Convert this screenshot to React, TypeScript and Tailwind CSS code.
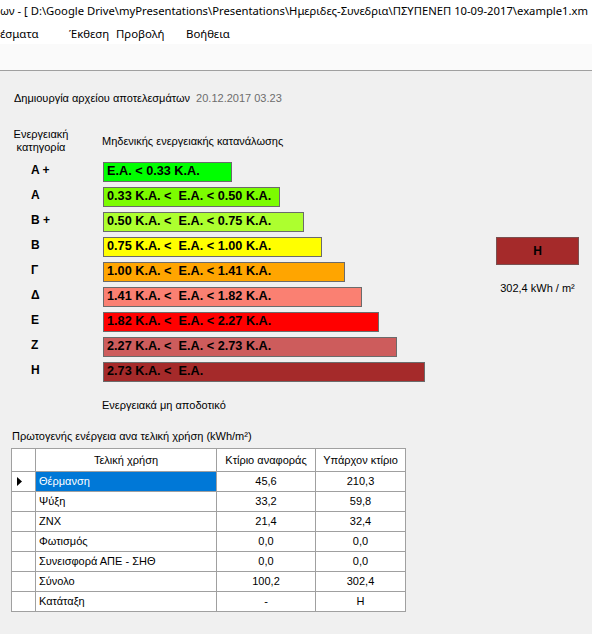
import React from "react";

const bars = [
  { label: "A +", text: "E.A. < 0.33 K.A.", w: 129, c: "bg-[#00ff00]" },
  { label: "A", text: "0.33 K.A. <  E.A. < 0.50 K.A.", w: 177, c: "bg-[#7cfc00]" },
  { label: "B +", text: "0.50 K.A. <  E.A. < 0.75 K.A.", w: 201, c: "bg-[#adff2f]" },
  { label: "B", text: "0.75 K.A. <  E.A. < 1.00 K.A.", w: 219, c: "bg-[#ffff00]" },
  { label: "Γ", text: "1.00 K.A. <  E.A. < 1.41 K.A.", w: 242, c: "bg-[#ffa500]" },
  { label: "Δ", text: "1.41 K.A. <  E.A. < 1.82 K.A.", w: 259, c: "bg-[#fa8072]" },
  { label: "E", text: "1.82 K.A. <  E.A. < 2.27 K.A.", w: 276, c: "bg-[#ff0000]" },
  { label: "Z", text: "2.27 K.A. <  E.A. < 2.73 K.A.", w: 294, c: "bg-[#cd5c5c]" },
  { label: "H", text: "2.73 K.A. <  E.A.", w: 322, c: "bg-[#a52a2a]" },
];

const rows = [
  ["Θέρμανση", "45,6", "210,3"],
  ["Ψύξη", "33,2", "59,8"],
  ["ZNX", "21,4", "32,4"],
  ["Φωτισμός", "0,0", "0,0"],
  ["Συνεισφορά ΑΠΕ - ΣΗΘ", "0,0", "0,0"],
  ["Σύνολο", "100,2", "302,4"],
  ["Κατάταξη", "-", "H"],
];

export default function App() {
  return (
    <div className="w-[592px] h-[634px] overflow-hidden bg-[#f0f0f0] text-black" style={{ fontFamily: '"Liberation Sans", Arial, sans-serif' }}>
      <div className="bg-white" style={{ fontFamily: '"Noto Sans", "Open Sans", sans-serif' }}>
        <div className="h-[22px] flex items-center whitespace-nowrap overflow-hidden text-[11.25px] leading-none">
          <span>ων - [ D:\Google Drive\myPresentations\Presentations\Ημεριδες-Συνεδρια\ΠΣΥΠΕΝΕΠ 10-09-2017\example1.xm</span>
        </div>
        <div className="h-[22px] flex items-center whitespace-nowrap text-[11.4px] leading-none pt-[2px]">
          <span className="w-[69px]">έσματα</span>
          <span className="w-[47px]">Έκθεση</span>
          <span className="w-[70px]">Προβολή</span>
          <span>Βοήθεια</span>
        </div>
      </div>
      <div className="h-[27px] bg-[#fafafa] border-b border-[#a0a0a0]"></div>

      <div className="pt-[21px] pl-[14px] text-[11px] leading-[13px] whitespace-nowrap">
        <span>Δημιουργία αρχείου αποτελεσμάτων</span>
        <span className="ml-[6px] text-[#6d6d6d]">20.12.2017 03.23</span>
      </div>

      <div className="flex mt-[23px] text-[11px] leading-[13px]">
        <div className="w-[82px] text-center">
          <div>Ενεργειακή</div>
          <div>κατηγορία</div>
        </div>
        <div className="ml-[20px] pt-[7px]">Μηδενικής ενεργειακής κατανάλωσης</div>
      </div>

      <div className="flex mt-[8px]">
        <div className="flex flex-col">
          {bars.map((b) => (
            <div key={b.label} className="flex h-[25px]">
              <div className="w-[103px] pl-[31px] pt-[2px] text-[12px] leading-[13px] font-bold">{b.label}</div>
              <div
                className={`h-[20px] border border-[#6b6b6b] flex items-center pl-[3px] text-[12.7px] font-bold whitespace-pre ${b.c}`}
                style={{ width: b.w }}
              >
                {b.text}
              </div>
            </div>
          ))}
          <div className="pl-[102px] mt-[12px] text-[11px] leading-[13px]">Ενεργειακά μη αποδοτικό</div>
        </div>
        <div className="ml-auto mr-[13px] w-[83px] flex flex-col items-center">
          <div className="mt-[75px] w-[83px] h-[28px] bg-[#a52a2a] border border-[#7a5050] flex items-center justify-center text-[12px] font-bold">H</div>
          <div className="mt-[17px] text-[11px] leading-[13px] whitespace-nowrap">
            302,4 kWh / m²
          </div>
        </div>
      </div>

      <div className="mt-[18px] pl-[12px] text-[11px] leading-[13px]">
        Πρωτογενής ενέργεια ανα τελική χρήση (kWh/m²)
      </div>

      <div className="ml-[11px] mt-[5px] w-[395px] border-l border-t border-[#a0a0a0] grid grid-cols-[24px_181px_99px_90px] text-[11px]">
        <div className="h-[23px] bg-white border-r border-b border-[#a0a0a0]"></div>
        <div className="h-[23px] bg-white border-r border-b border-[#a0a0a0] flex items-center justify-center">Τελική χρήση</div>
        <div className="h-[23px] bg-white border-r border-b border-[#a0a0a0] flex items-center justify-center whitespace-nowrap">Κτίριο αναφοράς</div>
        <div className="h-[23px] bg-white border-r border-b border-[#a0a0a0] flex items-center justify-center whitespace-nowrap">Υπάρχον κτίριο</div>
        {rows.map((r, i) => (
          <React.Fragment key={r[0]}>
            <div className="h-[20px] bg-white border-r border-b border-[#a0a0a0] flex items-center pl-[5px]">
              {i === 0 && (
                <svg width="5" height="9" viewBox="0 0 5 9">
                  <path d="M0 0 L5 4.5 L0 9 Z" fill="#000" />
                </svg>
              )}
            </div>
            <div
              className={`h-[20px] border-r border-b border-[#a0a0a0] flex items-center pl-[3px] whitespace-nowrap ${
                i === 0 ? "bg-[#0078d7] text-white" : "bg-white"
              }`}
            >
              {r[0]}
            </div>
            <div className="h-[20px] bg-white border-r border-b border-[#a0a0a0] flex items-center justify-center">{r[1]}</div>
            <div className="h-[20px] bg-white border-r border-b border-[#a0a0a0] flex items-center justify-center">{r[2]}</div>
          </React.Fragment>
        ))}
      </div>
    </div>
  );
}
